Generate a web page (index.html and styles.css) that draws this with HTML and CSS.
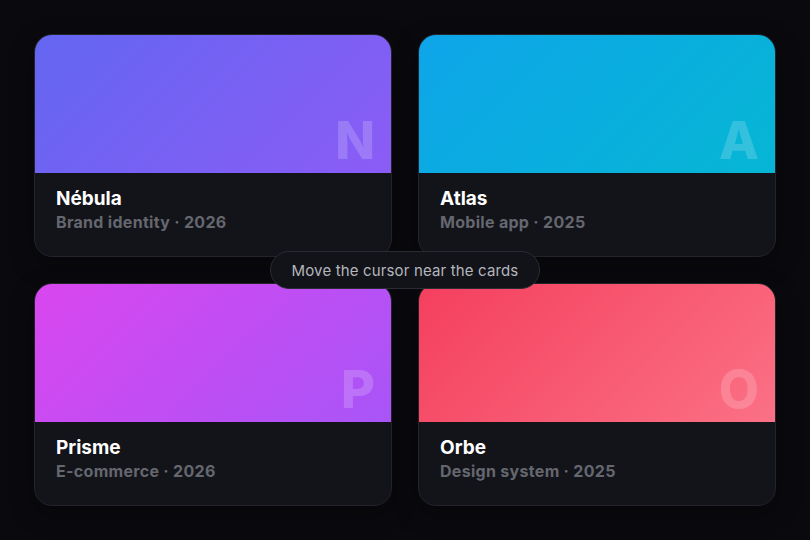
FILE: index.html
```html
<!DOCTYPE html>
<html lang="en">
<head>
<meta charset="utf-8">
<title>Projects</title>
<link rel="stylesheet" href="styles.css">
</head>
<body>
<main class="stage">
  <div class="grid">
    <article class="card">
      <div class="cover cover-nebula"><span class="letter">N</span></div>
      <div class="info">
        <h2 class="title">Nébula</h2>
        <p class="meta">Brand identity · 2026</p>
      </div>
    </article>
    <article class="card">
      <div class="cover cover-atlas"><span class="letter">A</span></div>
      <div class="info">
        <h2 class="title">Atlas</h2>
        <p class="meta">Mobile app · 2025</p>
      </div>
    </article>
    <article class="card">
      <div class="cover cover-prisme"><span class="letter">P</span></div>
      <div class="info">
        <h2 class="title">Prisme</h2>
        <p class="meta">E-commerce · 2026</p>
      </div>
    </article>
    <article class="card">
      <div class="cover cover-orbe"><span class="letter">O</span></div>
      <div class="info">
        <h2 class="title">Orbe</h2>
        <p class="meta">Design system · 2025</p>
      </div>
    </article>
  </div>
  <div class="hint">Move the cursor near the cards</div>
</main>
</body>
</html>
```

FILE: styles.css
```css
* { box-sizing: border-box; }
html, body {
  margin: 0;
  padding: 0;
  background: #0a0a0e;
  font-family: Inter, "Noto Sans", "Liberation Sans", sans-serif;
  -webkit-font-smoothing: antialiased;
}
.stage {
  position: relative;
  width: 810px;
  height: 540px;
  padding: 34px;
}
.grid {
  display: grid;
  grid-template-columns: 1fr 1fr;
  grid-template-rows: 1fr 1fr;
  gap: 26px;
  height: 100%;
}
.card {
  display: flex;
  flex-direction: column;
  border-radius: 18px;
  overflow: hidden;
  background: #13141a;
  border: 1px solid #23242b;
  box-shadow: 0 8px 24px rgba(0,0,0,0.35);
}
.cover {
  height: 138px;
  flex: none;
  display: flex;
  align-items: flex-end;
  justify-content: flex-end;
  padding: 0 16px 6px 0;
}
.cover-nebula { background: linear-gradient(135deg, #6366f1 0%, #8b5cf6 100%); }
.cover-atlas { background: linear-gradient(135deg, #0ea5e9 0%, #06b6d4 100%); }
.cover-prisme { background: linear-gradient(135deg, #d946ef 0%, #a855f7 100%); }
.cover-orbe { background: linear-gradient(135deg, #f43f5e 0%, #fb7185 100%); }
.letter {
  font-size: 52px;
  font-weight: 800;
  line-height: 1;
  color: rgba(255,255,255,0.18);
}
.info {
  flex: 1;
  padding: 14px 21px 0;
}
.title {
  margin: 0;
  font-size: 19px;
  font-weight: 700;
  color: #ffffff;
  line-height: 24px;
}
.meta {
  margin: 0;
  font-size: 16px;
  font-weight: 700;
  color: #65676f;
  line-height: 22px;
  letter-spacing: 0.3px;
}
.hint {
  position: absolute;
  left: 270px;
  top: 251px;
  width: 270px;
  height: 38px;
  display: flex;
  align-items: center;
  justify-content: center;
  border-radius: 19px;
  background: #121319;
  border: 1px solid #2a2b33;
  color: #b4b6bd;
  font-size: 15px;
  font-weight: 400;
  letter-spacing: 0.15px;
}
```
